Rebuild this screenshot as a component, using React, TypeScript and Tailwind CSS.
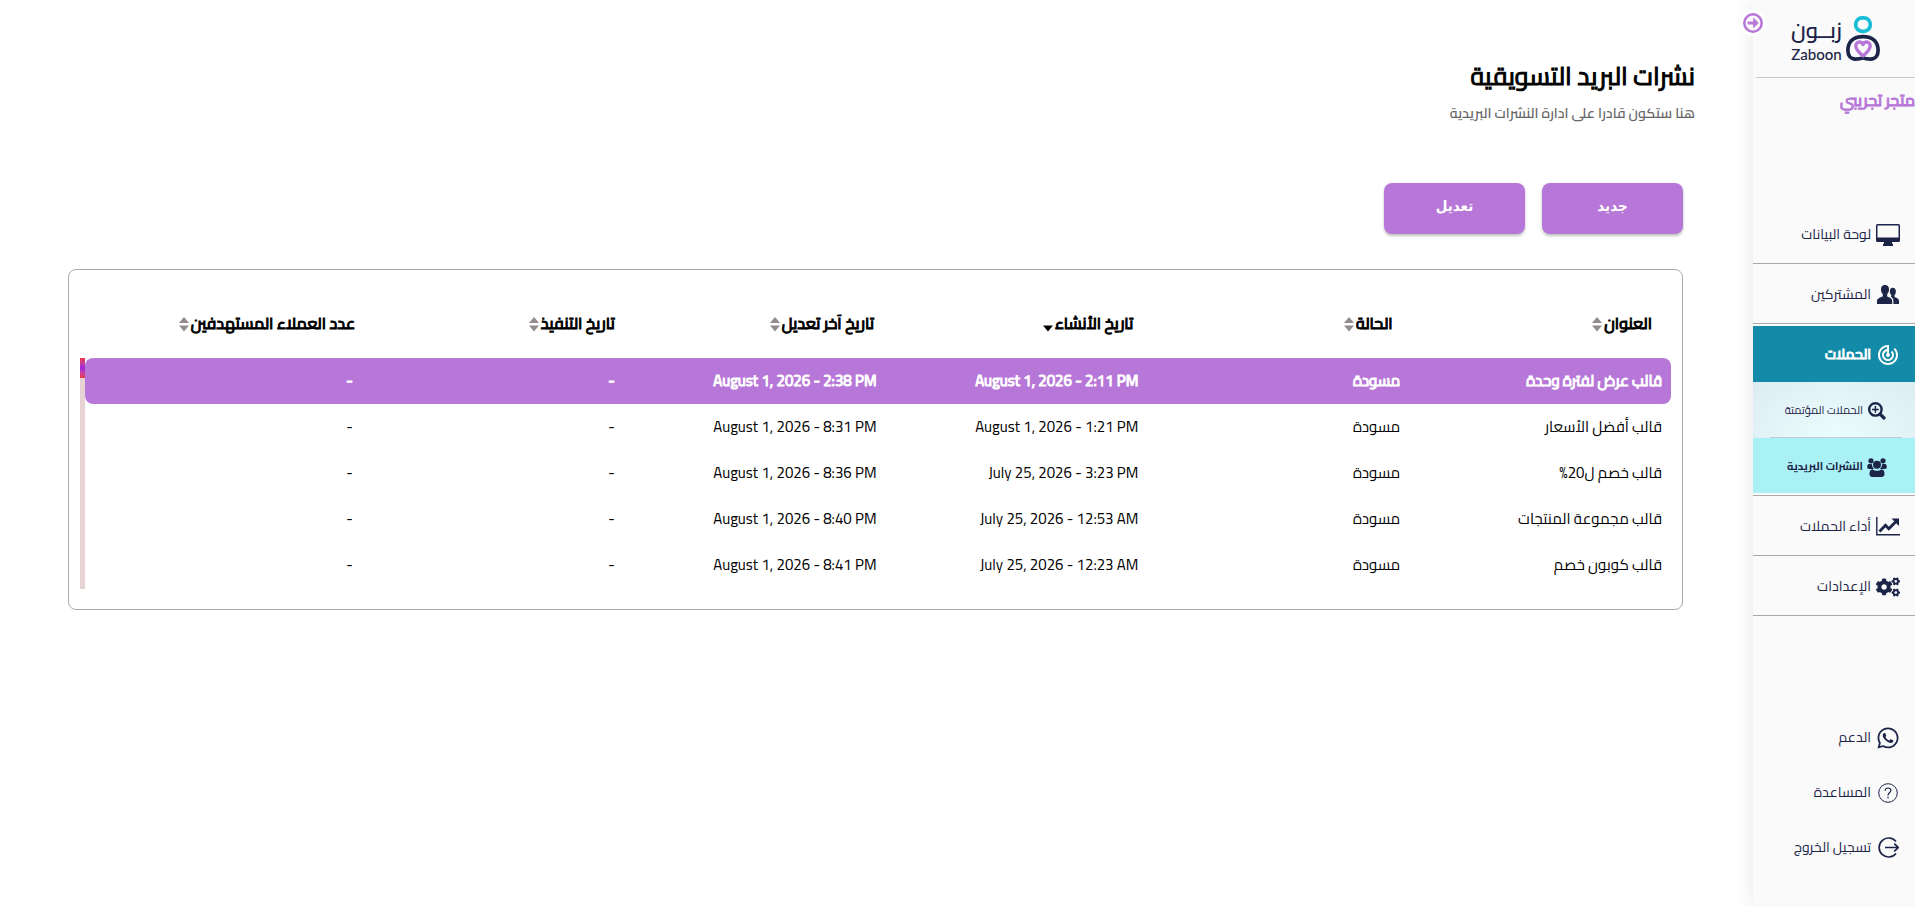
import React, { useState } from 'react';
import { FaCogs, FaWhatsapp } from 'react-icons/fa';
import { MdTrackChanges } from 'react-icons/md';

interface Campaign {
  id: number;
  title: string;
  status: string;
  createdAt: string;
  updatedAt: string;
  executedAt: string;
  targeted: string;
}

const campaigns: Campaign[] = [
  { id: 1, title: 'قالب عرض لفترة وحدة', status: 'مسودة', createdAt: 'August 1, 2026 - 2:11 PM', updatedAt: 'August 1, 2026 - 2:38 PM', executedAt: '-', targeted: '-' },
  { id: 2, title: 'قالب أفضل الأسعار', status: 'مسودة', createdAt: 'August 1, 2026 - 1:21 PM', updatedAt: 'August 1, 2026 - 8:31 PM', executedAt: '-', targeted: '-' },
  { id: 3, title: 'قالب خصم ل20%', status: 'مسودة', createdAt: 'July 25, 2026 - 3:23 PM', updatedAt: 'August 1, 2026 - 8:36 PM', executedAt: '-', targeted: '-' },
  { id: 4, title: 'قالب مجموعة المنتجات', status: 'مسودة', createdAt: 'July 25, 2026 - 12:53 AM', updatedAt: 'August 1, 2026 - 8:40 PM', executedAt: '-', targeted: '-' },
  { id: 5, title: 'قالب كوبون خصم', status: 'مسودة', createdAt: 'July 25, 2026 - 12:23 AM', updatedAt: 'August 1, 2026 - 8:41 PM', executedAt: '-', targeted: '-' },
];

const columns = [
  { key: 'title', label: 'العنوان' },
  { key: 'status', label: 'الحالة' },
  { key: 'createdAt', label: 'تاريخ الأنشاء' },
  { key: 'updatedAt', label: 'تاريخ آخر تعديل' },
  { key: 'executedAt', label: 'تاريخ التنفيذ' },
  { key: 'targeted', label: 'عدد العملاء المستهدفين' },
] as const;

// Icons

const MonitorIcon = () => (
  <svg viewBox="0 0 24 22" className="h-[22px] w-6" fill="currentColor">
    <path fillRule="evenodd" d="M1.5 0h21A1.5 1.5 0 0 1 24 1.5v15a1.5 1.5 0 0 1-1.500 1.500H16v1.800h1V22H7v-2.200h1V18H1.500A1.500 1.500 0 0 1 0 16.500v-15A1.500 1.500 0 0 1 1.500 0zM1.500 1.500v12h21v-12z" />
  </svg>
);

const PeopleIcon = () => (
  <svg viewBox="0 0 22 19" className="h-[19px] w-[22px]" fill="currentColor">
    <path d="M8 0c2.600 0 4 1.800 4 4.400 0 1.900-.7 3.700-1.800 4.700v2.400c2.600.9 5 2 5 4.500v3H0v-3c0-2.500 3-3.600 5.800-4.500V9.100C4.700 8.100 4 6.300 4 4.400 4 1.800 5.400 0 8 0z" />
    <path d="M15.700 2.700c2 0 3.200 1.500 3.200 3.700 0 1.500-.6 2.900-1.400 3.700v2c2.400.8 4.500 1.800 4.500 4V19h-5.600v-3.200c0-2-1.200-3.300-3-4.200l.9-.4v-1.200c-.9-.8-1.400-2.200-1.400-3.600 0-2.200.8-3.700 2.800-3.700z" />
  </svg>
);

const ZoomPlusIcon = () => (
  <svg viewBox="0 0 18 18" className="size-[18px]" fill="none" stroke="currentColor">
    <circle cx="7.400" cy="7.400" r="6.200" strokeWidth="2.400" />
    <path d="M7.400 4v6.800M4 7.400h6.800" strokeWidth="1.500" />
    <path d="M12 12l5 5" strokeWidth="3.200" />
  </svg>
);

const GroupIcon = () => (
  <svg viewBox="0 0 20 19" className="h-[19px] w-5" fill="currentColor">
    <circle cx="4" cy="2.800" r="2.600" />
    <circle cx="16" cy="2.800" r="2.600" />
    <circle cx="10" cy="6.700" r="4" />
    <path d="M1.800 6h3c.2 2.300 1 4 2.300 5H2.200C.9 11 .2 10.300.200 9c0-1.300.5-3 1.600-3zM18.200 6h-3c-.2 2.300-1 4-2.300 5h4.900c1.300 0 2-.7 2-2 0-1.300-.5-3-1.600-3z" />
    <path d="M5.500 11.300c1.300 1 2.800 1.500 4.500 1.500s3.200-.5 4.500-1.500c2.200.3 3 2.300 3 4.700 0 2-1 3-3 3h-9c-2 0-3-1-3-3 0-2.400.8-4.400 3-4.700z" />
  </svg>
);

const ChartIcon = () => (
  <svg viewBox="0 0 24 19" className="h-[19px] w-6">
    <path d="M.800 0v17.800H24" fill="none" stroke="currentColor" strokeWidth="1.400" />
    <path d="M3.500 14.500l6-6.300 3.300 3.600L19.500 5" fill="none" stroke="currentColor" strokeWidth="2.800" />
    <path d="M15.500 1.500H23V9z" fill="currentColor" />
  </svg>
);

const HelpIcon = () => (
  <svg viewBox="0 0 20 20" className="size-5" fill="none" stroke="currentColor" strokeWidth="1">
    <circle cx="10" cy="10" r="9.300" />
    <path d="M7.200 7.700c0-1.700 1.200-2.700 2.800-2.700s2.800 1 2.800 2.600c0 2.200-2.800 2.300-2.800 5" strokeWidth="1.200" />
    <path d="M10 13.800v1.500" strokeWidth="1.400" />
  </svg>
);

const LogoutIcon = () => (
  <svg viewBox="0 0 21 21" className="size-[21px]" fill="none" stroke="currentColor" strokeWidth="1.700">
    <path d="M18 4.500a9.500 9.500 0 1 0 0 12" />
    <path d="M7 10.500h13M16.300 6.600l3.900 3.900-3.900 3.900" />
  </svg>
);

const ArrowCircleIcon = () => (
  <svg viewBox="0 0 20 20" className="size-5">
    <circle cx="10" cy="10" r="8.700" fill="#fafafa" stroke="currentColor" strokeWidth="2.600" />
    <path d="M4.600 8.400h5.600V4.600L15.800 10l-5.600 5.400v-3.800H4.600z" fill="currentColor" />
  </svg>
);

const LogoMark = () => (
  <svg viewBox="0 0 34 45" className="h-[45px] w-[34px]" fill="none">
    <rect x="9.700" y="1.900" width="14.600" height="13.400" rx="6.400" stroke="#18bdd6" strokeWidth="3.700" />
    <path d="M16.900 41.800C14.500 43 12.500 43.100 9.500 43.100 4.500 43.100 1.900 39.500 1.900 34.500 1.900 26 7 20.600 17 20.600s15.100 5.400 15.100 13.900c0 5-2.600 8.600-7.600 8.600-3 0-5 0-7.600-1.300z" stroke="#1c2448" strokeWidth="3.700" />
    <path d="M17 40c-4-3.500-7.200-6.500-7.200-10 0-2.400 1.700-4 3.600-4 1.700 0 2.900 1 3.600 2.400.7-1.400 1.900-2.400 3.600-2.400 1.900 0 3.600 1.600 3.600 4 0 3.500-3.200 6.500-7.200 10z" fill="#fafafa" stroke="#b777d8" strokeWidth="3.400" strokeLinejoin="round" />
  </svg>
);

const SortIcon: React.FC<{ active: boolean }> = ({ active }) => (
  <svg viewBox="0 0 10 15" className="h-[15px] w-[10px]">
    {!active && <path d="M0 6l5-6 5 6z" fill="#948b8d" />}
    <path d="M0 8.500h10l-5 6z" fill={active ? '#000' : '#948b8d'} />
  </svg>
);

// Sidebar

interface NavItemProps {
  icon: React.ReactNode;
  label: string;
  className?: string;
}

const NavItem: React.FC<NavItemProps> = ({ icon, label, className = '' }) => (
  <a href="#" className={`flex items-center gap-[5px] pt-[2px] pr-[15px] text-sm ${className}`}>
    <span className="flex w-6 justify-center">{icon}</span>
    <span className="pb-[2px]">{label}</span>
  </a>
);

const SubNavItem: React.FC<NavItemProps> = ({ icon, label, className = '' }) => (
  <a href="#" className={`flex items-center gap-1 pt-[3px] pr-7 text-[11px] ${className}`}>
    <span className="flex w-5 justify-center">{icon}</span>
    <span className="pb-[2px]">{label}</span>
  </a>
);

const Sidebar = () => (
  <aside className="relative min-h-screen w-[162px] shrink-0 bg-[#fafafa] text-[#1c2448] shadow-[0_0_20px_rgba(0,0,0,0.1)]">
    <button
      type="button"
      aria-label="طي القائمة"
      className="absolute top-[10px] -left-[13px] rounded-full bg-white p-[3px] text-[#b777d8]"
    >
      <ArrowCircleIcon />
    </button>

    <div className="ml-[3px] flex h-[78px] items-start gap-1 border-b border-[#c8c8c8] pt-4 pr-[35px]">
      <LogoMark />
      <div className="flex flex-col items-center font-['Lato','Cairo',sans-serif]">
        <span className="text-[22px] leading-7 font-semibold">زبــون</span>
        <span className="text-[15px] leading-5 font-medium">Zaboon</span>
      </div>
    </div>
    <p className="h-[126px] pt-2 text-base leading-7 text-[#b777d8] [-webkit-text-stroke:1px]">متجر تجريبي</p>

    <nav>
      <NavItem icon={<MonitorIcon />} label="لوحة البيانات" className="h-[60px] border-b border-[#ababab]" />
      <NavItem icon={<PeopleIcon />} label="المشتركين" className="h-[60px] border-b border-[#ababab]" />
      <div className="border-b border-[#ababab] py-[2px]">
        <NavItem icon={<MdTrackChanges className="size-6" />} label="الحملات" className="h-14 bg-[#138ba8] text-white [-webkit-text-stroke:1px]" />
        <div className="bg-[radial-gradient(ellipse_at_bottom,#ecfdff,#dcecf1)]">
          <SubNavItem icon={<ZoomPlusIcon />} label="الحملات المؤتمتة" className="h-[55px]" />
          <hr className="mr-[13px] ml-[17px] border-[#c3cccf]" />
        </div>
        <SubNavItem icon={<GroupIcon />} label="النشرات البريدية" className="h-[55px] bg-[#aaf1f6] font-bold" />
      </div>
      <NavItem icon={<ChartIcon />} label="أداء الحملات" className="h-[60px] border-b border-[#ababab]" />
      <NavItem icon={<FaCogs className="size-6" />} label="الإعدادات" className="h-[60px] border-b border-[#ababab]" />
    </nav>

    <div className="mt-[93px]">
      <NavItem icon={<FaWhatsapp className="size-6" />} label="الدعم" className="h-[55px]" />
      <NavItem icon={<HelpIcon />} label="المساعدة" className="h-[55px]" />
      <NavItem icon={<LogoutIcon />} label="تسجيل الخروج" className="h-[55px]" />
    </div>
  </aside>
);

// Table of the email campaigns, one row can be selected
const CampaignsTable = () => {
  const [selectedId, setSelectedId] = useState(1);

  return (
    <div className="rounded-lg border border-[#ababab] px-[11px] pt-6 pb-5">
      <table className="block w-full text-right text-[15px]">
        <thead className="block">
          <tr className="grid h-16 grid-cols-6 items-center pr-[19px] pb-[3px] pl-4">
            {columns.map((column) => (
              <th key={column.key} className="text-base font-normal">
                <button type="button" className="flex items-center gap-[2px]">
                  <span className="pb-1 [-webkit-text-stroke:1px]">{column.label}</span>
                  <SortIcon active={column.key === 'createdAt'} />
                </button>
              </th>
            ))}
          </tr>
        </thead>
        <tbody className="relative block border-l-[5px] border-[#e7d2d4] pb-px">
          {campaigns.map((campaign) => (
            <tr
              key={campaign.id}
              onClick={() => setSelectedId(campaign.id)}
              className={`grid h-[46px] cursor-pointer grid-cols-6 items-center rounded-lg pr-[9px] pl-[6px] ${
                campaign.id === selectedId ? 'bg-[#b777d8] text-white [-webkit-text-stroke:1px]' : ''
              }`}
            >
              {columns.map((column) => (
                <td key={column.key}>
                  <span dir="auto">{campaign[column.key]}</span>
                </td>
              ))}
            </tr>
          ))}
          {/* Scroll thumb */}
          <tr className="absolute top-0 -left-[5px] h-5 w-[5px] bg-linear-to-b from-[#ef3340] via-[#a41ee0] to-[#ef3340]" aria-hidden="true" />
        </tbody>
      </table>
    </div>
  );
};

const App: React.FC = () => {
  return (
    <div dir="rtl" className="flex min-h-screen bg-white font-['Cairo','Open_Sans','DejaVu_Sans',sans-serif] text-black">
      <Sidebar />

      <main className="min-w-0 flex-1 pt-14 pr-[58px] pl-[68px]">
        <h1 className="text-[25px] leading-10 [-webkit-text-stroke:1px]">نشرات البريد التسويقية</h1>
        <p className="mt-[5px] text-sm leading-6 font-semibold text-[#666666]">هنا ستكون قادرا على ادارة النشرات البريدية</p>

        <div className="mt-[58px] mr-3">
          <div className="mb-[35px] flex gap-[17px] font-['DejaVu_Sans_Condensed','DejaVu_Sans',sans-serif]">
            <button type="button" className="h-[51px] w-[141px] rounded-lg bg-[#b777d8] pb-1 text-[15px] font-bold text-white shadow-[0_2px_3px_rgba(0,0,0,0.25)]">
              جديد
            </button>
            <button type="button" className="h-[51px] w-[141px] rounded-lg bg-[#b777d8] pb-1 text-[15px] font-bold text-white shadow-[0_2px_3px_rgba(0,0,0,0.25)]">
              تعديل
            </button>
          </div>
          <CampaignsTable />
        </div>
      </main>
    </div>
  );
};

export default App;
